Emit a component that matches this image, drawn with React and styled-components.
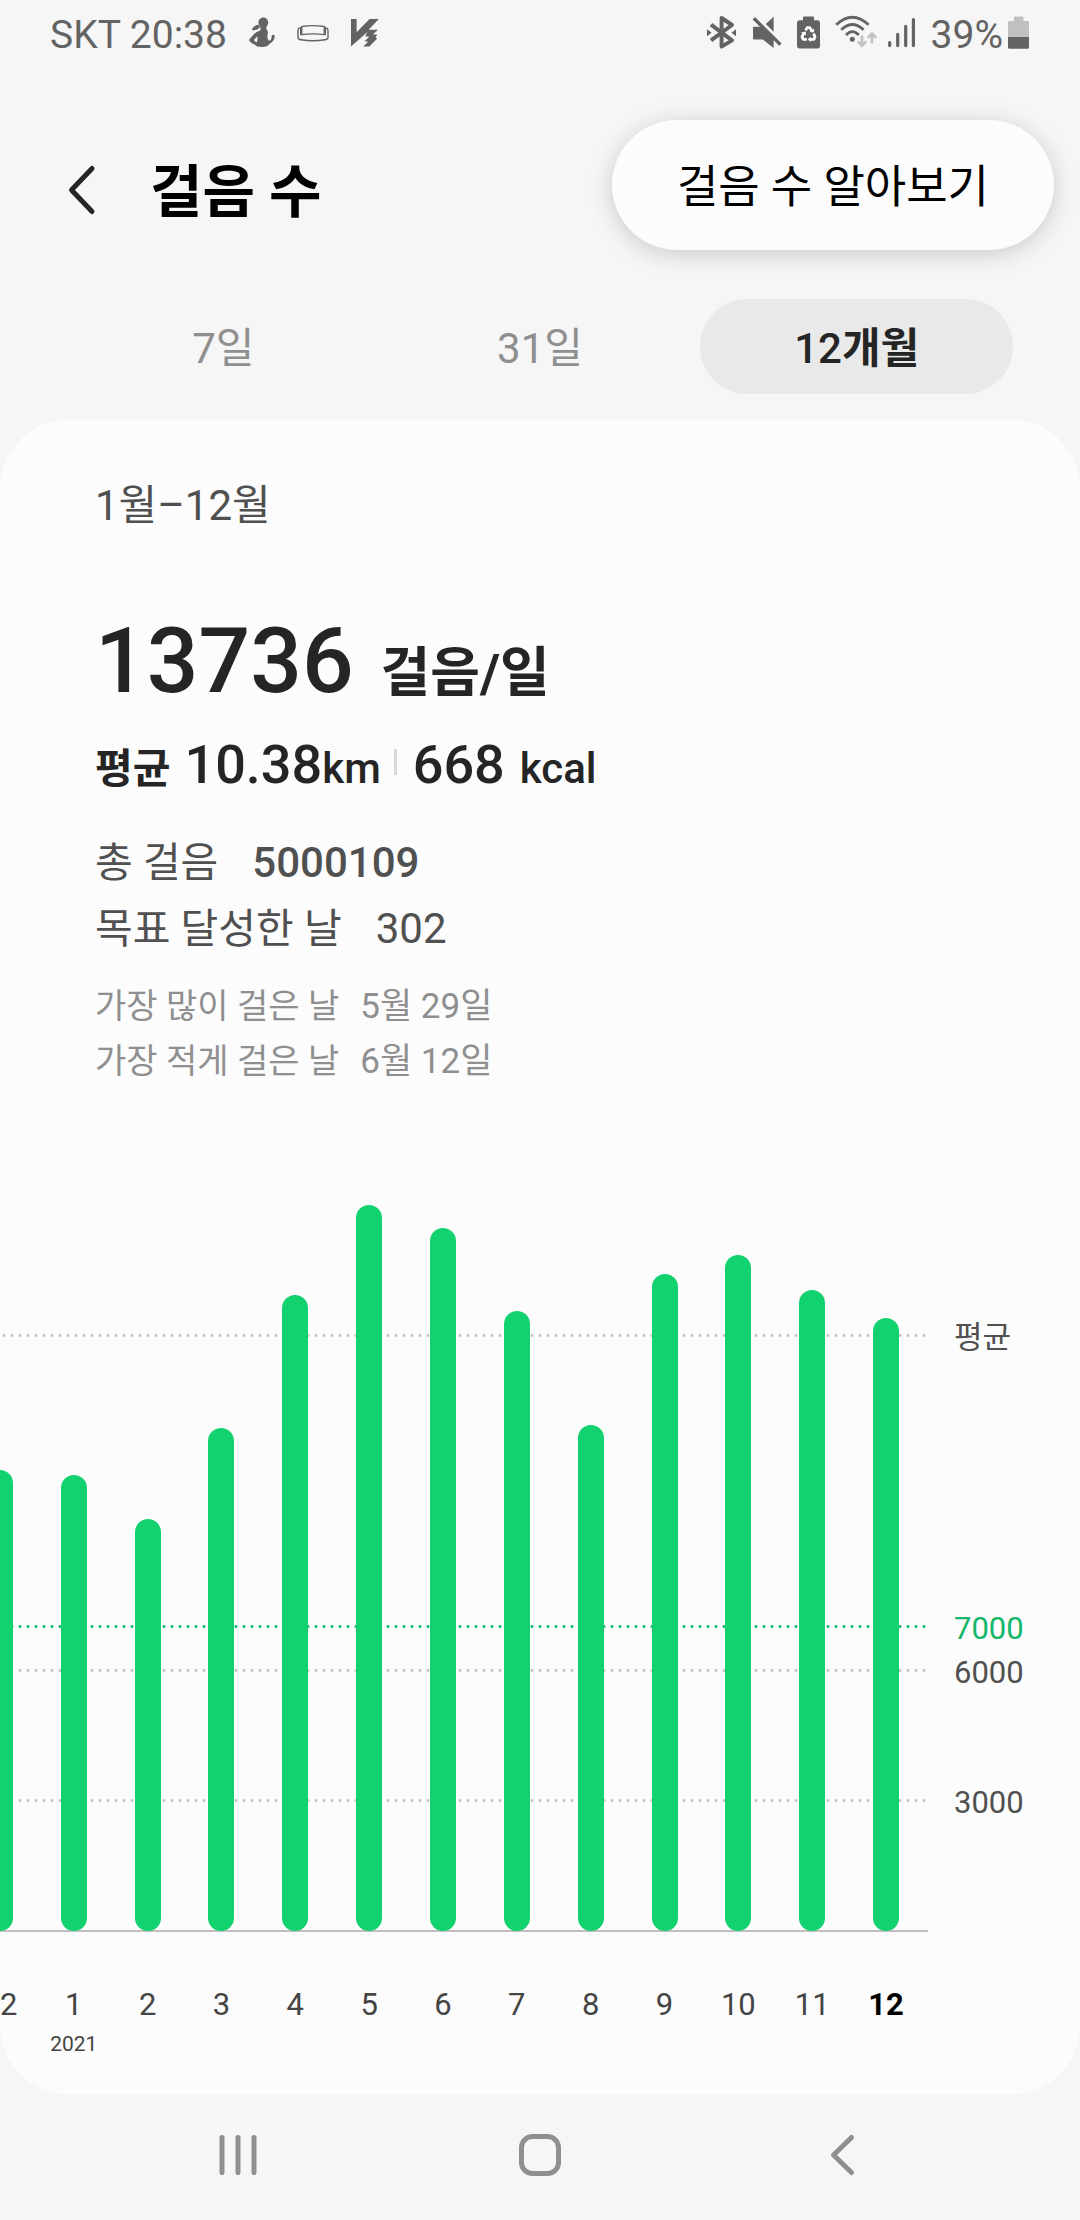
import React from "react";
import styled, { createGlobalStyle } from "styled-components";

const GlobalStyle = createGlobalStyle`
  *, *::before, *::after { box-sizing: border-box; }
  body {
    margin: 0;
    background: #f6f6f6;
    font-family: Roboto, "Noto Sans CJK KR", sans-serif;
    color: #252525;
  }
  button { font: inherit; color: inherit; border: 0; background: none; padding: 0; cursor: pointer; }
  h1, p, dl, dd, dt, ol { margin: 0; padding: 0; }
  svg { display: block; flex: none; overflow: visible; }
`;

const Screen = styled.div`
  position: relative;
  display: flex;
  flex-direction: column;
  min-height: 100vh;
  background: #f6f6f6;
  overflow: hidden;
`;

const StatusBar = styled.div`
  display: flex;
  align-items: center;
  justify-content: space-between;
  height: 70px;
  padding: 0 51px 0 50px;
  font-size: 39px;
  line-height: 48px;
  color: #636363;

  svg { margin-bottom: 6px; }
`;

const StatusGroup = styled.div`
  display: flex;
  align-items: center;
  gap: ${(p) => p.$gap}px;
`;

const BatteryLevel = styled.span`
  display: flex;
  align-items: center;
  gap: 5px;
`;

const Header = styled.header`
  display: flex;
  align-items: center;
  gap: 44px;
  height: 240px;
  padding: 0 58px;
`;

const BackButton = styled.button`
  display: flex;
  align-items: center;
  justify-content: center;
  width: 48px;
  height: 64px;
`;

const Title = styled.h1`
  padding-top: 6px;
  font-size: 57px;
  line-height: 72px;
  font-weight: 700;
  color: #000;
`;

const MenuPopup = styled.button`
  position: absolute;
  top: 120px;
  right: 26px;
  height: 130px;
  padding: 6px 65px 0;
  border-radius: 65px;
  background: #fcfcfc;
  box-shadow: 0 4px 24px rgba(0, 0, 0, 0.18);
  font-size: 45px;
  line-height: 56px;
  color: #000;
`;

const Tabs = styled.nav`
  display: flex;
  gap: 4px;
  margin-top: -11px;
  padding: 0 67px;
`;

const Tab = styled.button`
  flex: 1;
  height: 95px;
  padding-top: 4px;
  border-radius: 48px;
  font-size: 42px;
  line-height: 56px;
  font-weight: ${(p) => (p.$active ? 500 : 400)};
  color: ${(p) => (p.$active ? "#252525" : "#8f8f8f")};
  background: ${(p) => (p.$active ? "#e9e9e9" : "transparent")};
`;

const TabUnit = styled.span`
  font-weight: ${(p) => (p.$active ? 700 : 400)};
`;

const Card = styled.main`
  margin-top: 26px;
  padding: 58px 0 42px;
  border-radius: 68px;
  background: #fcfcfc;
  overflow: hidden;
`;

const Summary = styled.section`
  padding: 0 95px;
`;

const Period = styled.p`
  font-size: 42px;
  line-height: 56px;
  color: #505050;
`;

const Headline = styled.p`
  display: flex;
  align-items: baseline;
  gap: 27px;
  margin-top: 75px;
  font-size: 91px;
  line-height: 104px;
  font-weight: 500;
`;

const HeadlineUnit = styled.span`
  font-size: 54px;
  line-height: 1;
  font-weight: 700;
`;

const Averages = styled.p`
  display: flex;
  align-items: baseline;
  margin-top: 20px;
  font-size: 54px;
  line-height: 64px;
  font-weight: 500;
`;

const AverageLabel = styled.span`
  margin-right: 14px;
  font-size: 41px;
  line-height: 1;
  font-weight: 700;
`;

const Unit = styled.span`
  margin-left: ${(p) => (p.$spaced ? 15 : 0)}px;
  font-size: 42px;
  line-height: 1;
`;

const Divider = styled.span`
  align-self: center;
  width: 3px;
  height: 26px;
  margin: 0 16px 6px 13px;
  background: #d9d9d9;
`;

const Facts = styled.dl`
  margin-top: ${(p) => (p.$minor ? 17 : 33)}px;
  line-height: ${(p) => (p.$minor ? 55 : 66)}px;
  color: ${(p) => (p.$minor ? "#8f8f8f" : "#505050")};

  dt { font-size: ${(p) => (p.$minor ? 34 : 41)}px; }
  dd { font-size: ${(p) => (p.$minor ? 35 : 42)}px; }
`;

const Fact = styled.div`
  display: flex;
  gap: ${(p) => p.$gap}px;
`;

const FactValue = styled.dd`
  font-weight: ${(p) => (p.$strong ? 500 : 400)};
`;

const Chart = styled.section`
  display: grid;
  grid-template-columns: minmax(0, 1fr) 152px;
  margin-top: 102px;
`;

const Plot = styled.div`
  position: relative;
  z-index: 1;
  height: 740px;
  overflow: hidden;
`;

const GridLine = styled.div`
  position: absolute;
  left: 0;
  right: 0;
  height: 3px;
  margin-bottom: -2px;
  background: radial-gradient(circle at 50% 50%, ${(p) => (p.$goal ? "#12b76a" : "#c4c4c4")} 1px, transparent 2px) 0 0 / 8px 3px repeat-x;
`;

const Bars = styled.div`
  position: relative;
  display: flex;
  align-items: flex-end;
  height: 100%;
  margin-left: -37px;
  padding-right: 5px;
`;

const BarSlot = styled.div`
  display: flex;
  flex: 1;
  align-items: flex-end;
  justify-content: center;
  height: 100%;
`;

const Bar = styled.div`
  width: 26px;
  border-radius: 13px;
  background: #12d16f;
`;

const Scale = styled.div`
  position: relative;
`;

const ScaleLabel = styled.span`
  position: absolute;
  left: 26px;
  margin-bottom: -21px;
  font-size: 31px;
  line-height: 36px;
  color: ${(p) => (p.$goal ? "#12b76a" : "#505050")};
`;

const MonthAxis = styled.div`
  margin-top: -1px;
  border-top: 2px solid #bfbfbf;
  overflow: hidden;
`;

const Months = styled.ol`
  display: flex;
  list-style: none;
  margin-left: -37px;
  padding: 54px 5px 0 0;
`;

const Month = styled.li`
  flex: 1;
  height: 66px;
  text-align: center;
  font-size: 31px;
  line-height: 38px;
  font-weight: ${(p) => (p.$current ? 700 : 400)};
  color: ${(p) => (p.$current ? "#000" : "#454545")};
`;

const Year = styled.div`
  margin-top: 8px;
  font-size: 21px;
  line-height: 24px;
`;

const SystemNav = styled.nav`
  display: flex;
  height: 122px;
  padding: 0 87px;
`;

const NavButton = styled.button`
  display: flex;
  flex: 1;
  align-items: center;
  justify-content: center;
`;

const DARK = "#636363";
const LIGHT = "#c0c0c0";

const PersonIcon = () => (
  <svg width="26" height="34" viewBox="0 0 26 34" fill={DARK} aria-hidden="true">
    <ellipse cx="14.3" cy="7.6" rx="4.9" ry="5" />
    <path d="M2.6 15.2Q4 10.5 9.5 9.8L11 12Q9 15.6 2.6 15.2Z" />
    <path fillRule="evenodd" d="M11.4 11H17.4V14.6Q19.6 16.2 18.6 19.6Q18 22.4 19 24.6Q20 26.6 21.6 25Q22.8 23.4 22.6 20.8Q24 18.8 25.6 20.6Q26.2 25.4 20.6 28.8Q18.6 32 13 32Q7.4 32 6 29.8Q2 28.8 0 25.2Q0 24.2 5.6 18.4Q7.6 16.2 11.4 15.4ZM5.2 24.6Q4.6 25.4 7.6 27.6Q9 24.4 8.2 21.6Z" />
  </svg>
);

const BandIcon = () => (
  <svg width="32" height="34" viewBox="0 0 32 34" fill="none" stroke={DARK} aria-hidden="true">
    <path strokeWidth="1.4" d="M4.6 12.6Q1 12.8 1 15.4V22.4Q1 24.4 4 24.8Q16 26.6 28 24.8Q31 24.4 31 22.4V15.4Q31 12.8 27.6 12.6" />
    <path strokeWidth="1.4" d="M4 19.6V13.4Q4 11.4 6.4 11.2Q16 10 25.6 11.2Q28 11.4 28 13.4V19.6Q16 18.2 4 19.6Z" />
    <path strokeWidth="2.4" d="M4.2 12.8V19.6M27.8 12.8V19.6" />
  </svg>
);

const VaccineIcon = () => (
  <svg width="28" height="34" viewBox="0 0 28 34" fill={DARK} aria-hidden="true">
    <path d="M0 4H5.6V17.2L18.6 4H27.8L17.6 14.8H27L21.8 19.4H26.2L24.6 22.4L26.2 23.6L18.4 31.4H12.2L17.4 26.4H13.4L18.4 21.6H14.2L16.4 17L0 31.6Z" />
  </svg>
);

const BluetoothIcon = () => (
  <svg width="30" height="34" viewBox="0 0 30 34" aria-hidden="true">
    <path d="M4 9.6L25 25.4L14.6 31.6V3L25 10L4 25.4" fill="none" stroke={DARK} strokeWidth="4" strokeLinejoin="round" />
    <path d="M0 14.2L4.6 17.7L0 21.2ZM29 14.2L24.4 17.7L29 21.2Z" fill={DARK} />
  </svg>
);

const MuteIcon = () => (
  <svg width="30" height="34" viewBox="0 0 30 34" fill={DARK} aria-hidden="true">
    <path d="M1 13Q1 11.8 2.2 11.8H8.6L21.6 24.6V33L10.8 24.4H2.2Q1 24.4 1 23.2Z" />
    <path d="M21.6 1.8V16.8L13.8 9Z" />
    <path d="M1.8 3.2L28.4 29.6" stroke={DARK} strokeWidth="3.4" />
  </svg>
);

const RecycleBatteryIcon = () => (
  <svg width="23" height="34" viewBox="0 0 23 34" aria-hidden="true">
    <path fill={DARK} d="M6 5.3V2.6Q6 1.6 7 1.6H16Q17 1.6 17 2.6V5.3H20.4Q23 5.3 23 8V31Q23 33.4 20.4 33.4H2.6Q0 33.4 0 31V8Q0 5.3 2.6 5.3Z" />
    <path fill="none" stroke="#fff" strokeWidth="2.8" strokeLinejoin="round" d="M8.6 15.4L10.2 12.6H12.8L14.6 15.6M16.6 18.6L18 22L16.8 24.4H13.2M9.8 24.4H6.2L5 22L6.6 18.4" />
    <path fill="#fff" d="M12.6 17L17 13.6V17.6ZM4 17.4L8.8 16.6L9 20.4ZM13.6 21.6V27L10.8 24.4Z" />
  </svg>
);

const WifiIcon = () => (
  <svg width="38" height="34" viewBox="0 0 38 34" fill="none" stroke={DARK} strokeWidth="2.8" aria-hidden="true">
    <path d="M1.2 9.8Q17.3 -5.4 33.6 9.8M6.2 14.8Q17.3 4.2 28.6 14.8M11 20Q17.3 13.2 23.8 20" />
    <circle cx="17.3" cy="24.2" r="2.5" fill={DARK} stroke="none" />
    <path stroke={LIGHT} strokeWidth="2.6" d="M27 20.6V30M22.8 26.4L27 30.6L31.2 26.4M37 28.6V19.4M32.8 22.8L37 18.8L41.2 22.8" />
  </svg>
);

const SignalIcon = () => (
  <svg width="28" height="34" viewBox="0 0 28 34" stroke={DARK} strokeWidth="3.2" strokeLinecap="round" aria-hidden="true">
    <path d="M1.7 27.6V30.6M9.7 19.4V30.6M17.7 11.4V30.6M25.4 4.6V30.6" />
  </svg>
);

const BatteryIcon = () => (
  <svg width="21" height="34" viewBox="0 0 21 34" aria-hidden="true">
    <path fill={LIGHT} d="M6 6V2.6Q6 1.6 7 1.6H14.4Q15.4 1.6 15.4 2.6V6H19.6Q21 6 21 7.4V22H0V7.4Q0 6 1.4 6Z" />
    <path fill={DARK} d="M0 22H21V32.2Q21 33.8 19.6 33.8H1.4Q0 33.8 0 32.2Z" />
  </svg>
);

const MAX_STEPS = 17000;
const percent = (steps) => `${(steps / MAX_STEPS) * 100}%`;

const months = [
  { id: "2020-12", label: "12", steps: 10600 },
  { id: "2021-1", label: "1", steps: 10480, year: "2021" },
  { id: "2021-2", label: "2", steps: 9465 },
  { id: "2021-3", label: "3", steps: 11560 },
  { id: "2021-4", label: "4", steps: 14610 },
  { id: "2021-5", label: "5", steps: 16680 },
  { id: "2021-6", label: "6", steps: 16160 },
  { id: "2021-7", label: "7", steps: 14245 },
  { id: "2021-8", label: "8", steps: 11625 },
  { id: "2021-9", label: "9", steps: 15095 },
  { id: "2021-10", label: "10", steps: 15530 },
  { id: "2021-11", label: "11", steps: 14725 },
  { id: "2021-12", label: "12", steps: 14075, current: true },
];

const levels = [
  { label: "평균", steps: 13700 },
  { label: "7000", steps: 7000, goal: true },
  { label: "6000", steps: 6000 },
  { label: "3000", steps: 3000 },
];

const ranges = [
  { count: "7", unit: "일" },
  { count: "31", unit: "일" },
  { count: "12", unit: "개월" },
];

export default function App() {
  const [range, setRange] = React.useState("12");

  return (
    <>
      <GlobalStyle />
      <Screen>
        <StatusBar>
          <StatusGroup $gap={22}>
            <span>SKT 20:38</span>
            <PersonIcon />
            <BandIcon />
            <VaccineIcon />
          </StatusGroup>
          <StatusGroup $gap={15}>
            <BluetoothIcon />
            <MuteIcon />
            <RecycleBatteryIcon />
            <WifiIcon />
            <SignalIcon />
            <BatteryLevel>
              39%
              <BatteryIcon />
            </BatteryLevel>
          </StatusGroup>
        </StatusBar>

        <Header>
          <BackButton aria-label="뒤로">
            <svg width="28" height="50" viewBox="0 0 28 50" fill="none" stroke="#252525" strokeWidth="5" strokeLinecap="round" strokeLinejoin="round">
              <path d="M24 3.5L3.5 25L24 46.5" />
            </svg>
          </BackButton>
          <Title>걸음 수</Title>
        </Header>
        <MenuPopup>걸음 수 알아보기</MenuPopup>

        <Tabs>
          {ranges.map(({ count, unit }) => (
            <Tab key={count} $active={count === range} aria-pressed={count === range} onClick={() => setRange(count)}>
              {count}
              <TabUnit $active={count === range}>{unit}</TabUnit>
            </Tab>
          ))}
        </Tabs>

        <Card>
          <Summary>
            <Period>1월–12월</Period>
            <Headline>
              13736<HeadlineUnit>걸음/일</HeadlineUnit>
            </Headline>
            <Averages>
              <AverageLabel>평균</AverageLabel>
              10.38
              <Unit>km</Unit>
              <Divider />
              668
              <Unit $spaced>kcal</Unit>
            </Averages>
            <Facts>
              <Fact $gap={34}>
                <dt>총 걸음</dt>
                <FactValue $strong>5000109</FactValue>
              </Fact>
              <Fact $gap={34}>
                <dt>목표 달성한 날</dt>
                <FactValue>302</FactValue>
              </Fact>
            </Facts>
            <Facts $minor>
              <Fact $gap={21}>
                <dt>가장 많이 걸은 날</dt>
                <FactValue>5월 29일</FactValue>
              </Fact>
              <Fact $gap={21}>
                <dt>가장 적게 걸은 날</dt>
                <FactValue>6월 12일</FactValue>
              </Fact>
            </Facts>
          </Summary>

          <Chart>
            <Plot>
              {levels.map((level) => (
                <GridLine key={level.label} $goal={level.goal} style={{ bottom: percent(level.steps) }} />
              ))}
              <Bars>
                {months.map((month) => (
                  <BarSlot key={month.id}>
                    <Bar style={{ height: percent(month.steps) }} />
                  </BarSlot>
                ))}
              </Bars>
            </Plot>
            <Scale>
              {levels.map((level) => (
                <ScaleLabel key={level.label} $goal={level.goal} style={{ bottom: percent(level.steps) }}>
                  {level.label}
                </ScaleLabel>
              ))}
            </Scale>
            <MonthAxis>
              <Months>
                {months.map((month) => (
                  <Month key={month.id} $current={month.current}>
                    {month.label}
                    {month.year && <Year>{month.year}</Year>}
                  </Month>
                ))}
              </Months>
            </MonthAxis>
          </Chart>
        </Card>

        <SystemNav>
          <NavButton aria-label="최근 앱">
            <svg width="38" height="42" viewBox="0 0 38 42" stroke="#8f8f8f" strokeWidth="5" strokeLinecap="round">
              <path d="M3 3.5V38.5M19 3.5V38.5M35 3.5V38.5" />
            </svg>
          </NavButton>
          <NavButton aria-label="홈">
            <svg width="44" height="44" viewBox="0 0 44 44" fill="none" stroke="#8f8f8f" strokeWidth="5">
              <rect x="3.5" y="3.5" width="37" height="37" rx="11" />
            </svg>
          </NavButton>
          <NavButton aria-label="이전">
            <svg width="26" height="42" viewBox="0 0 26 42" fill="none" stroke="#8f8f8f" strokeWidth="5" strokeLinecap="round" strokeLinejoin="round">
              <path d="M22.5 3.5L4.5 21L22.5 38.5" />
            </svg>
          </NavButton>
        </SystemNav>
      </Screen>
    </>
  );
}
